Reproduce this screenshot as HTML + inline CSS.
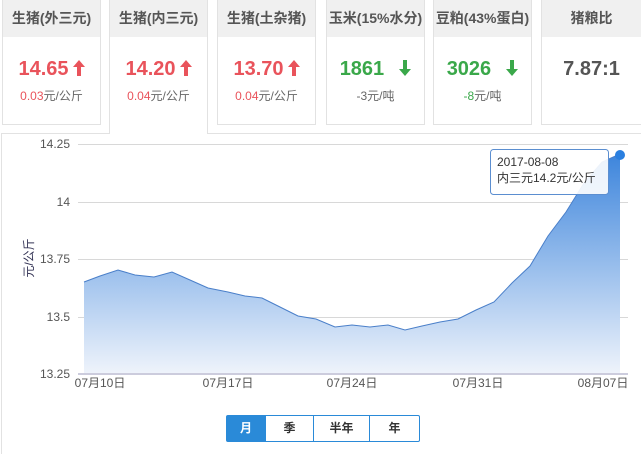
<!DOCTYPE html><html><head><meta charset="utf-8"><style>
body{margin:0;width:641px;height:451px;background:#fff;font-family:"Liberation Sans","Microsoft YaHei","Noto Sans CJK SC",sans-serif;position:relative;overflow:hidden}
.c{position:absolute;top:0;width:97px;height:124px;border:1px solid #e2e2e2;border-top:none;background:#fff}
.c .h{height:37px;background:#f0f0f0;text-align:center;line-height:37px;font-size:14px;font-weight:bold;color:#555}
.c .v{text-align:center;font-size:20px;font-weight:bold;margin-top:20px;height:24px;line-height:24px}
.c .v svg{vertical-align:-1px;margin-left:4px}
.c .s{text-align:center;font-size:12px;color:#666;margin-top:6px}
.r{color:#e9535b}.g{color:#3aa84a}
.panel{position:absolute;left:1px;top:133px;width:640px;height:320px;border-left:1px solid #e2e2e2;border-top:1px solid #e2e2e2}
.btns{position:absolute;left:226px;top:415px;display:flex;border:1px solid #2a8ad8;border-radius:2px}
.btns div{height:25px;line-height:25px;text-align:center;font-size:12px;color:#333;border-left:1px solid #2a8ad8;font-weight:bold}
</style></head><body>
<div class="panel"></div>
<div class="c" style="left:2px"><div class="h">生猪(外三元)</div><div class="v r">14.65<svg width="12" height="16" viewBox="0 0 12 16"><path d="M6,0 L12,7 H8 V16 H4 V7 H0Z" fill="#e9535b"/></svg></div><div class="s"><span class="r">0.03</span>元/公斤</div></div>
<div class="c" style="left:109px;height:134px;border-bottom:none"><div class="h">生猪(内三元)</div><div class="v r">14.20<svg width="12" height="16" viewBox="0 0 12 16"><path d="M6,0 L12,7 H8 V16 H4 V7 H0Z" fill="#e9535b"/></svg></div><div class="s"><span class="r">0.04</span>元/公斤</div></div>
<div class="c" style="left:217px"><div class="h">生猪(土杂猪)</div><div class="v r">13.70<svg width="12" height="16" viewBox="0 0 12 16"><path d="M6,0 L12,7 H8 V16 H4 V7 H0Z" fill="#e9535b"/></svg></div><div class="s"><span class="r">0.04</span>元/公斤</div></div>
<div class="c" style="left:326px"><div class="h">玉米(15%水分)</div><div class="v g">1861 &nbsp;<svg width="12" height="16" viewBox="0 0 12 16"><path d="M6,16 L12,9 H8 V0 H4 V9 H0Z" fill="#3aa84a"/></svg></div><div class="s">-3元/吨</div></div>
<div class="c" style="left:433px"><div class="h">豆粕(43%蛋白)</div><div class="v g">3026 &nbsp;<svg width="12" height="16" viewBox="0 0 12 16"><path d="M6,16 L12,9 H8 V0 H4 V9 H0Z" fill="#3aa84a"/></svg></div><div class="s"><span class="g">-8</span>元/吨</div></div>
<div class="c" style="left:541px;width:99px"><div class="h">猪粮比</div><div class="v" style="color:#555">7.87:1</div></div>
<svg style="position:absolute;left:0;top:0" width="641" height="451">
<defs><linearGradient id="a" x1="0" y1="0" x2="0" y2="1"><stop offset="0" stop-color="#3d85dc"/><stop offset="1" stop-color="#eef3fb"/></linearGradient></defs>
<g stroke="#d8d8d8" stroke-width="1"><line x1="78" y1="144.5" x2="628" y2="144.5"/><line x1="78" y1="202.5" x2="628" y2="202.5"/><line x1="78" y1="259.5" x2="628" y2="259.5"/><line x1="78" y1="317.5" x2="628" y2="317.5"/></g>
<line x1="78" y1="374" x2="628" y2="374" stroke="#ccd" stroke-width="2"/>
<path d="M84,282 L100,276 118,270 135,275 154,277 172,272 190,280 208,288 228,292 245,296 262,298 280,307 298,316 316,319 335,327 352,325 370,327 388,325 405,330 422,326 440,322 458,319 476,310 494,302 512,283 530,266 548,236 566,212 584,183 602,162 620,154 L620,373 84,373Z" fill="url(#a)"/>
<path d="M84,282 L100,276 118,270 135,275 154,277 172,272 190,280 208,288 228,292 245,296 262,298 280,307 298,316 316,319 335,327 352,325 370,327 388,325 405,330 422,326 440,322 458,319 476,310 494,302 512,283 530,266 548,236 566,212 584,183 602,162 620,154" fill="none" stroke="#4a7fc9" stroke-width="1"/>
<circle cx="620" cy="155" r="5" fill="#2a7fe0"/>
<g font-size="12" fill="#555" text-anchor="end"><text x="70" y="148">14.25</text><text x="70" y="206">14</text><text x="70" y="263">13.75</text><text x="70" y="321">13.5</text><text x="70" y="378">13.25</text></g>
<g font-size="12" fill="#555" text-anchor="middle"><text x="100" y="387">07月10日</text><text x="228" y="387">07月17日</text><text x="352" y="387">07月24日</text><text x="478" y="387">07月31日</text><text x="603" y="387">08月07日</text></g>
<text transform="translate(33,258) rotate(-90)" font-size="12" fill="#335" text-anchor="middle">元/公斤</text>
<rect x="490.5" y="149.5" width="118" height="45" rx="3" fill="#fff" fill-opacity="0.9" stroke="#5b8ed0"/>
<text x="497" y="166" font-size="12" fill="#333">2017-08-08</text><text x="497" y="182" font-size="12" fill="#333">内三元14.2元/公斤</text>
</svg>
<div class="btns"><div style="width:38px;background:#2a8ad8;color:#fff;border:none">月</div><div style="width:47px">季</div><div style="width:55px">半年</div><div style="width:49px">年</div></div>
</body></html>
